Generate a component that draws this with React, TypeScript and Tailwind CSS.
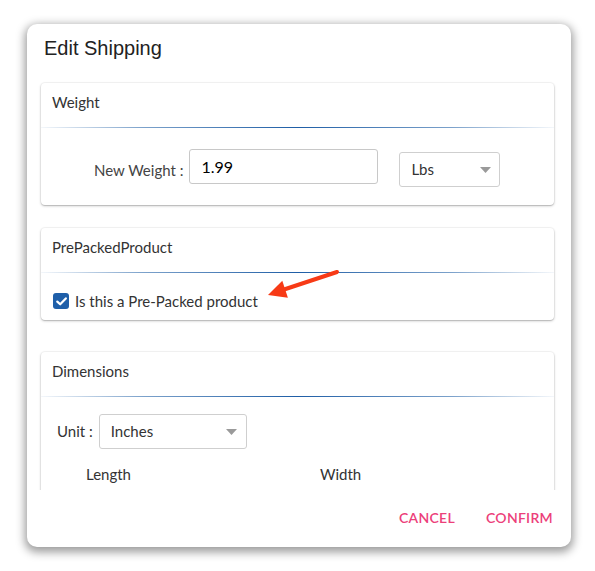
const cardShadow =
    'rounded-[4px] bg-white shadow-[0_1px_3px_rgba(0,0,0,0.2),0_1px_1px_rgba(0,0,0,0.12),0_0_0_1px_rgba(0,0,0,0.03)]';

function CardHeader({ title }: { title: string }) {
    return (
        <>
            <div className="h-[44px] pt-[9px] pl-[11px] text-[15px] leading-[20px] text-[#333]">{title}</div>
            <div className="h-px bg-[linear-gradient(90deg,rgba(36,99,168,0.05)_0%,rgba(36,99,168,0.6)_20%,#1f5ea6_50%,rgba(36,99,168,0.6)_80%,rgba(36,99,168,0.05)_100%)]" />
        </>
    );
}

function Caret() {
    return (
        <svg width="11" height="6" viewBox="0 0 11 6" className="shrink-0">
            <path d="M0 0h11L5.5 6z" fill="#9a9a9a" />
        </svg>
    );
}

export default function App() {
    return (
        <div className="min-h-screen bg-white pt-[24px] pl-[27px] font-['Lato','Noto_Sans',sans-serif]">
            <div className="flex h-[523px] w-[544px] flex-col rounded-[10px] bg-white shadow-[0_3px_10px_2px_rgba(0,0,0,0.4)]">
                <h2 className="pt-[12px] pl-[17px] font-['Liberation_Sans','Arial',sans-serif] text-[20px] leading-[24px] text-[#222]">
                    Edit Shipping
                </h2>

                <div className="mt-[12px] h-[418px] overflow-hidden pt-[11px] pr-[17px] pl-[14px]">
                    {/* weight */}
                    <section className={`${cardShadow} mb-[23px]`}>
                        <CardHeader title="Weight" />
                        <div className="flex items-start pt-[21px] pb-[18px] pl-[53px]">
                            <span className="mt-[14px] text-[15px] leading-[15px] text-[#444]">New Weight :</span>
                            <div className="ml-[6px] flex h-[35px] w-[189px] items-center rounded-[3px] border border-[#c8c8c8] pl-[11px] text-[16px] text-black">
                                1.99
                            </div>
                            <div className="mt-[3px] ml-[21px] flex h-[35px] w-[101px] items-center justify-between rounded-[3px] border border-[#cfcfcf] pr-[8px] pl-[11px] text-[15px] text-[#333]">
                                Lbs
                                <Caret />
                            </div>
                        </div>
                    </section>

                    {/* pre-packed */}
                    <section className={`${cardShadow} relative mb-[32px]`}>
                        <CardHeader title="PrePackedProduct" />
                        <label className="flex items-center gap-[6px] pt-[20px] pb-[11px] pl-[12px] text-[15px] leading-[16px] text-[#333]">
                            <span className="flex h-[16px] w-[16px] items-center justify-center rounded-[3px] bg-[#1f5fa9]">
                                <svg width="11" height="9" viewBox="0 0 11 9">
                                    <path d="M1.3 4.6 4.2 7.3 9.8 1.4" fill="none" stroke="#fff" strokeWidth="2.2" strokeLinecap="round" strokeLinejoin="round" />
                                </svg>
                            </span>
                            Is this a Pre-Packed product
                        </label>
                        <svg className="pointer-events-none absolute inset-0 h-full w-full overflow-visible">
                            <line x1="296" y1="44" x2="240" y2="62.5" stroke="#f73a16" strokeWidth="4" strokeLinecap="round" />
                            <path d="M227 67 L241.3 52.8 L246.9 69.8 Z" fill="#f73a16" />
                        </svg>
                    </section>

                    {/* dimensions */}
                    <section className={cardShadow}>
                        <CardHeader title="Dimensions" />
                        <div className="flex items-center pt-[17px] pl-[16px]">
                            <span className="text-[15px] text-[#333]">Unit :</span>
                            <div className="ml-[6px] flex h-[35px] w-[148px] items-center justify-between rounded-[3px] border border-[#cfcfcf] pr-[9px] pl-[11px] text-[15px] text-[#333]">
                                Inches
                                <Caret />
                            </div>
                        </div>
                        <div className="flex pt-[15px] pb-[20px] text-[15px] leading-[20px] text-[#333]">
                            <span className="w-[279px] pl-[45px]">Length</span>
                            <span>Width</span>
                        </div>
                    </section>
                </div>

                <div className="flex flex-1 items-center justify-end gap-[31px] pr-[18px] pb-[3px] text-[14px] font-semibold tracking-[0.02em] text-[#ec407a]">
                    <button>CANCEL</button>
                    <button>CONFIRM</button>
                </div>
            </div>
        </div>
    );
}
